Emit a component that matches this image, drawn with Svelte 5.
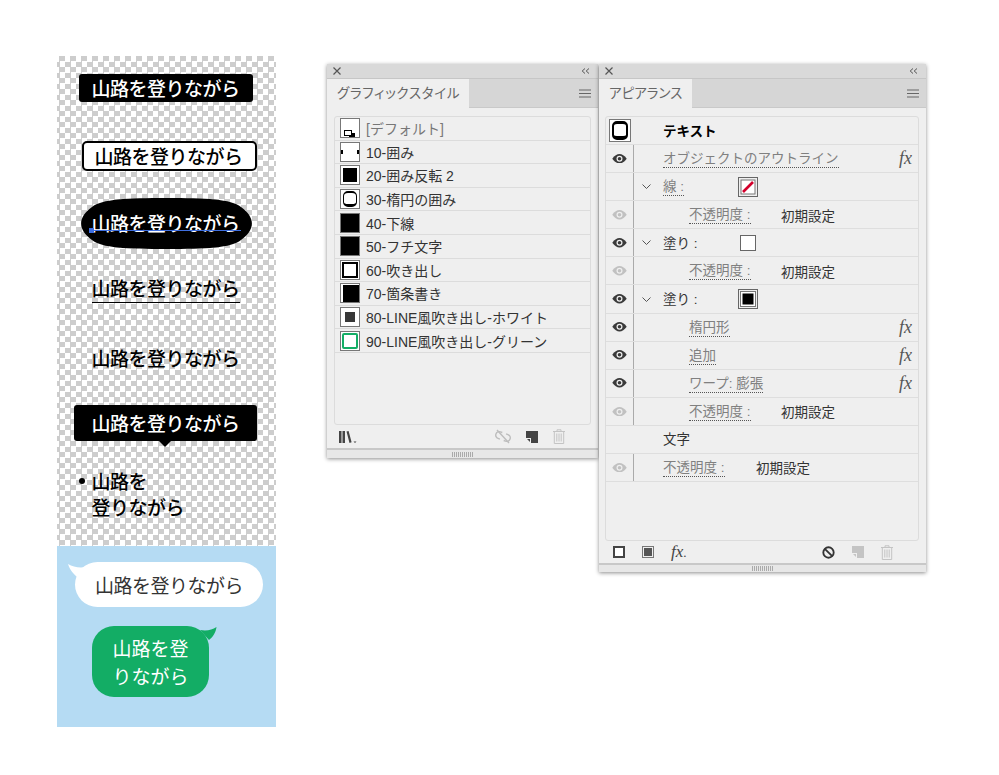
<script>
  const styles = [
    { t: 'default', n: '[デフォルト]', dim: true },
    { t: 'frame', n: '10-囲み' },
    { t: 'solid', n: '20-囲み反転 2' },
    { t: 'oval', n: '30-楕円の囲み' },
    { t: 'full', n: '40-下線' },
    { t: 'full', n: '50-フチ文字' },
    { t: 'balloon', n: '60-吹き出し' },
    { t: 'notch', n: '70-箇条書き' },
    { t: 'gray', n: '80-LINE風吹き出し-ホワイト' },
    { t: 'green', n: '90-LINE風吹き出し-グリーン' }
  ];
  const rows = [
    { k: 'thumb', label: 'テキスト' },
    { eye: 1, label: 'オブジェクトのアウトライン', link: 1, fx: 1 },
    { chev: 1, label: '線 :', link: 1, swatch: 'none' },
    { eye: 2, label: '不透明度 :', link: 1, sub: 1, val: '初期設定' },
    { eye: 1, chev: 1, label: '塗り :', swatch: 'white' },
    { eye: 2, label: '不透明度 :', link: 1, sub: 1, val: '初期設定' },
    { eye: 1, chev: 1, label: '塗り :', swatch: 'black' },
    { eye: 1, label: '楕円形', link: 1, sub: 1, fx: 1 },
    { eye: 1, label: '追加', link: 1, sub: 1, fx: 1 },
    { eye: 1, label: 'ワープ: 膨張', link: 1, sub: 1, fx: 1 },
    { eye: 2, label: '不透明度 :', link: 1, sub: 1, val: '初期設定' },
    { k: 'plain', label: '文字' },
    { eye: 2, label: '不透明度 :', link: 1, val: '初期設定', short: 1 }
  ];
</script>

{#snippet eye(dim)}
  <svg class="eye" class:dimmed={dim} viewBox="0 0 16 10" width="15" height="9.5">
    <path d="M.3 5C2.8 1.6 5.3 0 8 0s5.2 1.6 7.7 5C13.2 8.4 10.7 10 8 10S2.8 8.4.3 5z" fill="#3a3a3a" />
    <circle cx="8" cy="5" r="3.2" fill="#efefef" />
    <circle cx="8" cy="5" r="1.9" fill="#3a3a3a" />
  </svg>
{/snippet}

{#snippet titlebar()}
  <div class="titlebar">
    <svg viewBox="0 0 8 8" width="8" height="8"><path d="M.5.5l7 7M7.5.5l-7 7" stroke="#555" stroke-width="1.2" /></svg>
    <svg viewBox="0 0 9 6" width="9" height="6"><path d="M4 .5L1.2 3 4 5.5M8 .5L5.2 3 8 5.5" fill="none" stroke="#555" /></svg>
  </div>
{/snippet}

{#snippet tabs(name)}
  <div class="tabs">
    <div class="tab">{name}</div>
    <svg class="menu" viewBox="0 0 12 9" width="12" height="9"><path d="M0 1h12M0 4.5h12M0 8h12" stroke="#666" stroke-width="1.2" /></svg>
  </div>
{/snippet}

{#snippet grip()}
  <div class="grip"><span></span></div>
{/snippet}

{#snippet trash()}
  <svg viewBox="0 0 12 15" width="12" height="15"><path d="M0 2.5h12M4 2.5V.8h4v1.7M1.3 2.5V14.5h9.4V2.5M3.8 4.5v8M6 4.5v8M8.2 4.5v8" fill="none" stroke="#c4c4c4" /></svg>
{/snippet}

{#snippet newpage(c)}
  <svg viewBox="0 0 12 12" width="12" height="12"><path d="M0 0h12v12H5V7H0z" fill={c} /><path d="M1 8h3v3z" fill={c} /></svg>
{/snippet}

<div class="page">
  <div class="board">
    <div class="checker">
      <div class="item black">山路を登りながら</div>
      <div class="item outlined">山路を登りながら</div>
      <div class="blobwrap">
        <svg class="blob" viewBox="0 0 171 51" width="171" height="51" aria-hidden="true">
          <path d="M85.500 0C125 0 150 1 160 9c14.500 10.500 14.500 22.500 0 33-10 8-34.500 9-74.500 9S21 50 11 42C-3.500 31.500-3.500 19.500 11 9 21 1 46 0 85.500 0z" />
        </svg>
        <span class="blobtext">山路を登りながら</span>
        <i class="selline"></i><i class="selhandle"></i>
      </div>
      <div class="item under"><span>山路を登りながら</span></div>
      <div class="item plain">山路を登りながら</div>
      <div class="item callout">山路を登りながら<i></i></div>
      <div class="listitem"><b></b><span>山路を<br />登りながら</span></div>
    </div>
    <div class="sky">
      <div class="whitebubble">
        <svg viewBox="0 0 20 16" width="20" height="16"><path d="M0 0c5 3 11 4 18 3l-1 14C9 14 3 9 0 0z" fill="#fff" /></svg>
        山路を登りながら
      </div>
      <div class="greenbubble">
        <svg viewBox="0 0 20 16" width="20" height="16"><path d="M19.500 0C15 3 10 4 3 3L12 13C16 10 19 5 19.500 0z" fill="#13ad65" /></svg>
        山路を登<br />りながら
      </div>
    </div>
  </div>

  <section class="panel styles">
    {@render titlebar()}
    {@render tabs('グラフィックスタイル')}
    <div class="box stylebox">
      {#each styles as s}
        <div class="stylerow">
          <span class="thumb {s.t}"><i></i></span>
          <span class="name" class:dim={s.dim}>{s.n}</span>
        </div>
      {/each}
    </div>
    <div class="toolbar">
      <svg class="lib" viewBox="0 0 18 12" width="18" height="12"><path d="M0 0h2.500v12H0zM3.500 0H6v12H3.500zM7.500.6L9.600 0l3 11.300-2.100.6z" fill="#444" /><path d="M14.500 10.500h3l-1.500 1.500z" fill="#444" /></svg>
      <span class="spacer"></span>
      <svg viewBox="0 0 16 15" width="16" height="15"><g transform="rotate(20 8 7.500)"><path d="M6 4H4a3.500 3.500 0 000 7h2M10 4h2a3.500 3.500 0 010 7h-2" fill="none" stroke="#bdbdbd" stroke-width="1.400" /></g><path d="M2 1l12 13" stroke="#bdbdbd" stroke-width="1.400" /></svg>
      {@render newpage('#444')}
      {@render trash()}
    </div>
    {@render grip()}
  </section>

  <section class="panel appearance">
    {@render titlebar()}
    {@render tabs('アピアランス')}
    <div class="box appbox">
      {#each rows as r}
        <div class="approw">
          <span class="eyecell" class:rule={r.eye || r.chev}>
            {#if r.k === 'thumb'}
              <span class="bigthumb"><i></i></span>
            {:else if r.eye}
              {@render eye(r.eye === 2)}
            {/if}
          </span>
          <span class="chev">
            {#if r.chev}
              <svg viewBox="0 0 9 5" width="9" height="5"><path d="M.5.5L4.500 4.500 8.500.5" fill="none" stroke="#555" /></svg>
            {/if}
          </span>
          <span
            class="label"
            class:link={r.link}
            class:sub={r.sub}
            class:strong={r.k === 'thumb'}
          >{r.label}</span>
          {#if r.swatch === 'none'}
            <svg class="swatch" viewBox="0 0 20 20" width="20" height="20"><rect x=".5" y=".5" width="19" height="19" fill="#efefef" stroke="#666" /><rect x="3" y="3" width="14" height="14" fill="#fff" stroke="#777" /><path d="M5 15L15 5" stroke="#d3002c" stroke-width="2.600" /></svg>
          {:else if r.swatch === 'white'}
            <svg class="swatch" viewBox="0 0 20 20" width="20" height="20"><rect x="2.500" y="2.500" width="15" height="15" fill="#fff" stroke="#666" /></svg>
          {:else if r.swatch === 'black'}
            <svg class="swatch" viewBox="0 0 20 20" width="20" height="20"><rect x=".5" y=".5" width="19" height="19" fill="#efefef" stroke="#666" /><rect x="2.500" y="2.500" width="15" height="15" fill="#fff" stroke="#777" /><rect x="4.500" y="4.500" width="11" height="11" fill="#000" /></svg>
          {/if}
          {#if r.val}
            <span class="val" class:valshort={r.short}>{r.val}</span>
          {/if}
          {#if r.fx}
            <span class="fx">fx</span>
          {/if}
        </div>
      {/each}
    </div>
    <div class="toolbar apptools">
      <svg viewBox="0 0 12 12" width="12" height="12"><rect x="1" y="1" width="10" height="10" fill="#fff" stroke="#444" stroke-width="2" /></svg>
      <svg viewBox="0 0 12 12" width="12" height="12"><rect width="12" height="12" fill="#777" /><rect x="1" y="1" width="10" height="10" fill="#efefef" /><rect x="2" y="2" width="8" height="8" fill="#555" /></svg>
      <span class="fxtool">fx<small>.</small></span>
      <span class="spacer"></span>
      <svg viewBox="0 0 14 14" width="13" height="13"><circle cx="7" cy="7" r="5.600" fill="none" stroke="#333" stroke-width="2" /><path d="M3 3l8 8" stroke="#333" stroke-width="2" /></svg>
      {@render newpage('#c4c4c4')}
      {@render trash()}
    </div>
    {@render grip()}
  </section>
</div>

<style>
  :global(body) {
    background: #fff;
  }
  .page {
    display: flex;
    align-items: flex-start;
    width: 999px;
    height: 775px;
    overflow: hidden;
    font-family: "Liberation Sans", "Noto Sans CJK JP", sans-serif;
  }
  .board {
    width: 219px;
    margin: 56px 51px 0 57px;
    flex: none;
    font-family: "Noto Sans CJK JP", sans-serif;
    font-size: 19px;
    letter-spacing: -0.5px;
    font-weight: 500;
    line-height: 26px;
  }
  .checker {
    height: 490px;
    display: flex;
    flex-direction: column;
    overflow: hidden;
    background: conic-gradient(#cdcdcd 25%, #fff 0 50%, #cdcdcd 0 75%, #fff 0) -3px 0 / 11px 11px;
  }
  .item {
    white-space: nowrap;
    flex: none;
  }
  .black {
    background: #000;
    color: #fff;
    width: 174px;
    height: 28px;
    line-height: 28px;
    margin: 18px 0 0 22px;
    padding-left: 12.5px;
    box-sizing: border-box;
    border-radius: 3px;
  }
  .outlined {
    background: #fff;
    color: #000;
    width: 175px;
    height: 30px;
    line-height: 26px;
    margin: 39px 0 0 25px;
    padding-left: 10.5px;
    box-sizing: border-box;
    border: 2px solid #000;
    border-radius: 5px;
  }
  .blobwrap {
    position: relative;
    flex: none;
    width: 171px;
    height: 51px;
    margin: 27px 0 0 24px;
  }
  .blob {
    display: block;
    fill: #000;
  }
  .blobtext {
    position: absolute;
    left: 10.5px;
    top: 12px;
    color: #fff;
    white-space: nowrap;
  }
  .selline {
    position: absolute;
    left: 9px;
    top: 32px;
    width: 151px;
    height: 1px;
    background: #3f6fe0;
  }
  .selhandle {
    position: absolute;
    left: 8px;
    top: 30px;
    width: 5px;
    height: 5px;
    background: #3f6fe0;
  }
  .under {
    margin: 26px 0 0 34.5px;
    color: #000;
  }
  .under span {
    display: inline-block;
    border-bottom: 1.5px solid #000;
    padding-bottom: 1px;
  }
  .plain {
    margin: 42px 0 0 34.5px;
    color: #000;
  }
  .callout {
    position: relative;
    background: #000;
    color: #fff;
    width: 183px;
    height: 36px;
    line-height: 36px;
    margin: 34px 0 0 17px;
    padding-left: 17.5px;
    box-sizing: border-box;
    border-radius: 3px;
  }
  .callout i {
    position: absolute;
    left: 85px;
    bottom: -6px;
    border-left: 6px solid transparent;
    border-right: 6px solid transparent;
    border-top: 6px solid #000;
  }
  .listitem {
    display: flex;
    align-items: flex-start;
    margin: 27px 0 0 22px;
    color: #000;
    flex: none;
  }
  .listitem b {
    width: 6px;
    height: 6px;
    border-radius: 50%;
    background: #000;
    margin: 10px 6.5px 0 0;
  }
  .sky {
    height: 181px;
    background: #b5dbf3;
    display: flex;
    flex-direction: column;
    font-weight: 400;
    line-height: 28px;
  }
  .whitebubble {
    position: relative;
    width: 188px;
    height: 45px;
    line-height: 45px;
    margin: 16px 0 0 18px;
    padding-left: 20px;
    box-sizing: border-box;
    background: #fff;
    color: #333;
    border-radius: 23px;
    white-space: nowrap;
  }
  .whitebubble svg {
    position: absolute;
    left: -7px;
    top: 2px;
  }
  .greenbubble {
    position: relative;
    width: 117px;
    height: 71px;
    margin: 19px 0 0 35px;
    padding-top: 8px;
    box-sizing: border-box;
    background: #13ad65;
    color: #fff;
    border-radius: 22px;
    text-align: center;
    letter-spacing: 0;
  }
  .greenbubble svg {
    position: absolute;
    right: -8px;
    top: 1px;
  }
  .panel {
    flex: none;
    margin-top: 64px;
    background: #efefef;
    box-shadow: 0 1px 4px rgba(0, 0, 0, 0.45);
    color: #333;
    display: flex;
    flex-direction: column;
    box-sizing: border-box;
  }
  .styles {
    width: 271px;
    height: 394px;
  }
  .appearance {
    width: 327px;
    height: 508px;
    margin-left: 1px;
  }
  .titlebar {
    height: 14px;
    background: #d9d9d9;
    display: flex;
    align-items: center;
    justify-content: space-between;
    padding: 0 8px 0 6px;
    flex: none;
    border-bottom: 1px solid #c6c6c6;
  }
  .tabs {
    height: 28px;
    background: #d6d6d6;
    display: flex;
    align-items: stretch;
    justify-content: space-between;
    flex: none;
    border-bottom: 1px solid #c9c9c9;
  }
  .tab {
    background: #efefef;
    padding: 0 10px;
    margin-bottom: -1px;
    font-size: 13.5px;
    line-height: 30px;
    color: #666;
    font-feature-settings: "palt";
  }
  .styles .tab {
    letter-spacing: 0.7px;
    padding: 0 9px 0 10px;
  }
  .menu {
    align-self: center;
    margin-right: 7px;
  }
  .box {
    border: 1px solid #dcdcdc;
    border-radius: 3px;
    box-sizing: border-box;
    flex: none;
  }
  .stylebox {
    margin: 8px 7px 0 7px;
    height: 309px;
  }
  .stylerow {
    height: 23.6px;
    box-sizing: border-box;
    display: flex;
    align-items: center;
    gap: 6px;
    padding-left: 5px;
    border-bottom: 1px solid #dcdcdc;
    font-size: 14px;
  }
  .name {
    white-space: nowrap;
    color: #333;
  }
  .name.dim {
    color: #777;
  }
  .thumb {
    width: 20px;
    height: 20px;
    box-sizing: border-box;
    border: 1px solid #777;
    background: #fff;
    position: relative;
    display: block;
    flex: none;
  }
  .thumb i {
    position: absolute;
    display: block;
  }
  .thumb.default i {
    left: 3px;
    bottom: 1px;
    width: 6px;
    height: 4px;
    border: 1px solid #000;
    box-shadow: 4px 2px 0 -1px #000;
  }
  .thumb.frame i {
    left: 0;
    right: 0;
    top: 7px;
    height: 4px;
    border-left: 2px solid #000;
    border-right: 2px solid #000;
  }
  .thumb.solid i {
    inset: 2px;
    background: #000;
  }
  .thumb.oval i {
    inset: 1px 2px;
    border: 2px solid #000;
    border-width: 2px 1px 3px;
    border-radius: 5px;
    background: #fff;
  }
  .thumb.full {
    background: #000;
  }
  .thumb.balloon i {
    inset: 1px;
    border: 2px solid #000;
    background: #fff;
  }
  .thumb.notch i {
    inset: 1px 0 0 2px;
    background: #000;
  }
  .thumb.gray i {
    inset: 4px;
    background: #383838;
  }
  .thumb.green i {
    inset: 1px;
    border: 2px solid #13ad65;
    border-radius: 2px;
    background: #fff;
  }
  .toolbar {
    flex: none;
    height: 23px;
    display: flex;
    align-items: center;
    gap: 15px;
    padding: 0 33px 0 12px;
    box-sizing: border-box;
  }
  .spacer {
    flex: 1;
  }
  .grip {
    flex: 1;
    background: #e7e7e7;
    border-top: 2px solid #c8c8c8;
    display: flex;
    align-items: center;
    justify-content: center;
  }
  .grip span {
    display: block;
    width: 22px;
    height: 5px;
    background: repeating-linear-gradient(90deg, #aaa 0 1px, transparent 1px 2px);
  }
  .appbox {
    margin: 8px 7px 0 6px;
    height: 425px;
  }
  .approw {
    height: 28.08px;
    box-sizing: border-box;
    display: flex;
    align-items: center;
    border-bottom: 1px solid #dedede;
    font-size: 13.5px;
    position: relative;
    white-space: nowrap;
  }
  .eyecell {
    width: 28px;
    align-self: stretch;
    flex: none;
    display: flex;
    align-items: center;
    justify-content: center;
    box-sizing: border-box;
  }
  .eyecell.rule {
    border-right: 1px solid #aaa;
  }
  .eye.dimmed {
    opacity: 0.25;
  }
  .bigthumb {
    width: 22px;
    height: 23px;
    box-sizing: border-box;
    border: 1px solid #777;
    background: #fff;
    display: flex;
    padding: 1px 2px;
  }
  .bigthumb i {
    flex: 1;
    border: 2px solid #000;
    border-radius: 5px;
    border-top-width: 3px;
    border-bottom-width: 4px;
  }
  .chev {
    width: 29px;
    flex: none;
    display: flex;
    align-items: center;
    padding-left: 8px;
    box-sizing: border-box;
  }
  .label {
    color: #333;
    line-height: 17px;
    padding-top: 1px;
  }
  .label.sub {
    margin-left: 26px;
  }
  .label.link {
    color: #808080;
    border-bottom: 1px dotted #555;
  }
  .label.strong {
    font-weight: 700;
    color: #000;
  }
  .swatch {
    position: absolute;
    left: 132px;
    top: 4px;
  }
  .val {
    position: absolute;
    left: 175px;
    color: #333;
  }
  .val.valshort {
    left: 150px;
  }
  .fx {
    position: absolute;
    right: 6px;
    font-family: "Liberation Serif", serif;
    font-style: italic;
    font-size: 18px;
    color: #555;
  }
  .apptools {
    gap: 17px;
    height: 22px;
    padding: 0 33px 0 14px;
  }
  .fxtool {
    font-family: "Liberation Serif", serif;
    font-style: italic;
    font-size: 17px;
    color: #444;
  }
  .fxtool small {
    font-style: normal;
    font-size: 13px;
  }
</style>
